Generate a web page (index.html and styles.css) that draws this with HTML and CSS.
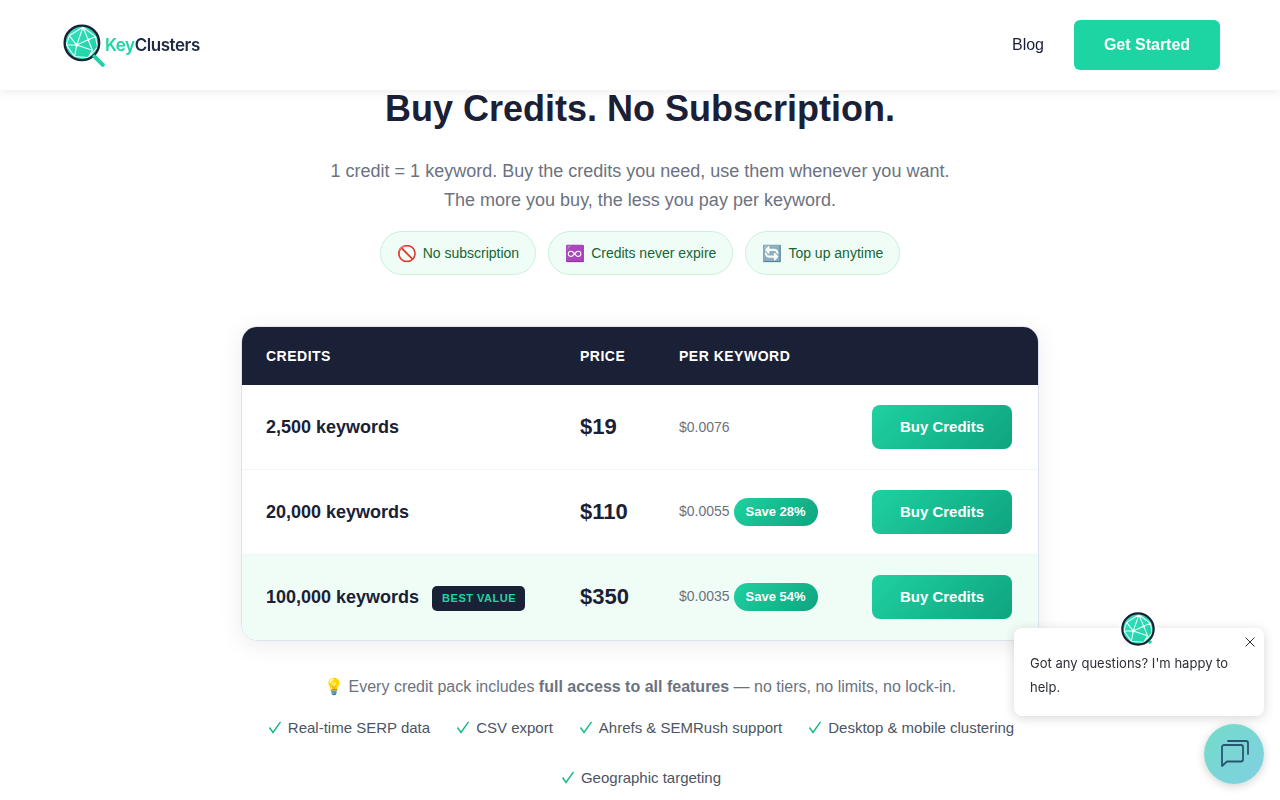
FILE: index.html
```html
<!DOCTYPE html>
<html lang="en">
<head>
    <meta charset="UTF-8">
    <meta name="viewport" content="width=device-width, initial-scale=1.0">
    <title>KeyClusters - Pricing</title>
    <link rel="stylesheet" href="styles.css">
</head>
<body>
    <svg class="defs" width="0" height="0" aria-hidden="true">
        <defs>
            <linearGradient id="globeFill" x1="0" y1="0" x2="1" y2="1">
                <stop offset="0" stop-color="#35e2bf"/>
                <stop offset="1" stop-color="#1ccfa6"/>
            </linearGradient>
            <g id="globe">
                <circle cx="20" cy="20" r="16" fill="url(#globeFill)"/>
                <path d="M8 13L21 5L33 14L35 24L26 34L13 33L5 22Z M8 13L15 22L21 5L26 17L33 14 M15 22L26 17L30 27L26 34 M15 22L13 33 M15 22L30 27 M5 22L15 22" fill="none" stroke="#eafff9" stroke-width="1.100"/>
                <circle cx="15" cy="22" r="1.700" fill="#fff"/>
                <circle cx="26" cy="17" r="1.300" fill="#fff"/>
                <circle cx="21" cy="6" r="1.100" fill="#fff"/>
                <circle cx="20" cy="20" r="16.500" fill="none" stroke="#1a2035" stroke-width="2.300"/>
            </g>
            <path id="check" d="M3.500 6.500L7 11.500L14.500 0.800" fill="none" stroke="#10b981" stroke-width="1.400"/>
        </defs>
    </svg>

    <header class="topbar">
        <a class="logo" href="#">
            <svg class="logo-mark" width="46" height="46" viewBox="0 0 44 44">
                <use href="#globe"/>
                <path d="M32 33L40 41" stroke="#1fd1a8" stroke-width="3.800" stroke-linecap="round"/>
            </svg>
            <span class="logo-text"><span class="logo-key">Key</span>Clusters</span>
        </a>
        <nav class="topnav">
            <a class="nav-link" href="#">Blog</a>
            <a class="nav-cta" href="#">Get Started</a>
        </nav>
    </header>

    <main class="page">
        <h1>Buy Credits. No Subscription.</h1>
        <p class="lead">1 credit = 1 keyword. Buy the credits you need, use them whenever you want.<br>The more you buy, the less you pay per keyword.</p>

        <div class="pills">
            <span class="pill"><span class="pill-icon">🚫</span>No subscription</span>
            <span class="pill"><span class="pill-icon">♾️</span>Credits never expire</span>
            <span class="pill"><span class="pill-icon">🔄</span>Top up anytime</span>
        </div>

        <div class="table-wrap">
            <table class="price-table">
                <thead>
                    <tr>
                        <th class="col-credits">Credits</th>
                        <th class="col-price">Price</th>
                        <th class="col-per">Per Keyword</th>
                        <th class="col-buy"></th>
                    </tr>
                </thead>
                <tbody>
                    <tr>
                        <td class="credits">2,500 keywords</td>
                        <td class="price">$19</td>
                        <td class="per">$0.0076</td>
                        <td><a class="buy-btn" href="#">Buy Credits</a></td>
                    </tr>
                    <tr>
                        <td class="credits">20,000 keywords</td>
                        <td class="price">$110</td>
                        <td class="per">$0.0055 <span class="save">Save 28%</span></td>
                        <td><a class="buy-btn" href="#">Buy Credits</a></td>
                    </tr>
                    <tr class="best">
                        <td class="credits"><div class="credits-row">100,000 keywords <span class="best-tag">Best Value</span></div></td>
                        <td class="price">$350</td>
                        <td class="per">$0.0035 <span class="save">Save 54%</span></td>
                        <td><a class="buy-btn" href="#">Buy Credits</a></td>
                    </tr>
                </tbody>
            </table>
        </div>

        <p class="includes">💡 Every credit pack includes <strong>full access to all features</strong> — no tiers, no limits, no lock-in.</p>

        <ul class="features">
            <li><svg class="tick" width="17" height="13" viewBox="0 0 17 13"><use href="#check"/></svg>Real-time SERP data</li>
            <li><svg class="tick" width="17" height="13" viewBox="0 0 17 13"><use href="#check"/></svg>CSV export</li>
            <li><svg class="tick" width="17" height="13" viewBox="0 0 17 13"><use href="#check"/></svg>Ahrefs &amp; SEMRush support</li>
            <li><svg class="tick" width="17" height="13" viewBox="0 0 17 13"><use href="#check"/></svg>Desktop &amp; mobile clustering</li>
            <li><svg class="tick" width="17" height="13" viewBox="0 0 17 13"><use href="#check"/></svg>Geographic targeting</li>
        </ul>
    </main>

    <aside class="chat-bubble">
        <svg class="chat-avatar" width="38" height="38" viewBox="0 0 40 40">
            <use href="#globe"/>
            <circle cx="33" cy="34" r="2" fill="#1fd1a8"/>
        </svg>
        <svg class="chat-close" width="12" height="12" viewBox="0 0 12 12">
            <path d="M1.500 1.500L10.500 10.500M10.500 1.500L1.500 10.500" stroke="#2b2f36" stroke-width="1"/>
        </svg>
        <p>Got any questions? I'm happy to help.</p>
    </aside>
    <button class="chat-launcher" aria-label="Open chat">
        <svg width="32" height="32" viewBox="0 0 32 32" fill="none" stroke="#2a5570" stroke-width="1.800" stroke-linejoin="round" stroke-linecap="round">
            <path d="M4 9a2 2 0 0 1 2-2h17a2 2 0 0 1 2 2v12.500a2 2 0 0 1-2 2H9L4 28Z"/>
            <path d="M10 3h18a2 2 0 0 1 2 2v11"/>
        </svg>
    </button>
</body>
</html>
```

FILE: styles.css
```css
/* Reset */
* {
    margin: 0;
    padding: 0;
    box-sizing: border-box;
}

body {
    font-family: 'Liberation Sans', Arial, sans-serif;
    background: #fff;
    color: #1a2035;
    height: 800px;
    overflow: hidden;
    position: relative;
}

a {
    text-decoration: none;
}

.defs {
    position: absolute;
}

/* Header */
.topbar {
    position: fixed;
    top: 0;
    left: 0;
    right: 0;
    height: 90px;
    z-index: 10;
    background: #fff;
    box-shadow: 0 2px 10px rgba(0, 0, 0, 0.08);
    display: flex;
    justify-content: space-between;
    align-items: center;
    padding: 0 60px 0 61px;
}

.logo {
    display: flex;
    align-items: center;
}

.logo-text {
    font-family: 'Inter', sans-serif;
    font-size: 17px;
    font-weight: 600;
    letter-spacing: -0.45px;
    color: #1f2a44;
    margin-left: -2px;
}

.logo-key {
    color: #1fd5a5;
}

.topnav {
    display: flex;
    align-items: center;
    gap: 30px;
}

.nav-link {
    font-size: 16px;
    color: #1a2035;
}

.nav-cta {
    width: 146px;
    height: 50px;
    line-height: 50px;
    text-align: center;
    background: #1dd5a3;
    color: #fff;
    font-size: 16px;
    font-weight: 700;
    border-radius: 6px;
}

/* Main */
.page {
    padding-top: 88px;
    text-align: center;
}

h1 {
    font-size: 36px;
    line-height: 42px;
    font-weight: 700;
    color: #1a2035;
}

.lead {
    margin-top: 27px;
    font-size: 18px;
    line-height: 29px;
    color: #6b7280;
}

/* Pills */
.pills {
    margin-top: 16px;
    display: flex;
    justify-content: center;
    gap: 12px;
}

.pill {
    display: flex;
    align-items: center;
    height: 44px;
    padding: 0 16px;
    background: #f0fdf6;
    border: 1px solid #c9f2dd;
    border-radius: 22px;
    font-size: 14px;
    color: #166534;
}

.pill-icon {
    font-size: 16px;
    margin-right: 6px;
}

/* Pricing table */
.table-wrap {
    width: 798px;
    margin: 51px auto 0;
    border: 1px solid #dde3f0;
    border-radius: 16px;
    overflow: hidden;
    box-shadow: 0 4px 24px rgba(0, 0, 0, 0.08);
}

.price-table {
    width: 796px;
    border-collapse: separate;
    border-spacing: 0;
    table-layout: fixed;
    text-align: left;
}

.price-table th {
    height: 58px;
    padding: 0 24px;
    background: #1a2035;
    color: #fff;
    font-size: 14px;
    font-weight: 700;
    letter-spacing: 0.5px;
    text-transform: uppercase;
}

.col-credits { width: 314px; }
.col-price { width: 99px; }
.col-per { width: 193px; }
.col-buy { width: 190px; }

.price-table td {
    height: 85px;
    padding: 0 24px;
    border-bottom: 1px solid #f1f5f9;
}

.price-table tr:last-child td {
    border-bottom-color: transparent;
}

.best td {
    background: #f0fdf6;
}

.credits {
    font-size: 18px;
    font-weight: 700;
    color: #1a2035;
    white-space: nowrap;
}

.credits-row {
    display: flex;
    align-items: center;
    gap: 13px;
}

.best-tag {
    height: 25px;
    line-height: 25px;
    margin-top: 2px;
    padding: 0 9px 0 10px;
    background: #1a2035;
    color: #1fd5a5;
    font-size: 11px;
    letter-spacing: 0.5px;
    text-transform: uppercase;
    border-radius: 5px;
}

.price {
    font-size: 22px;
    font-weight: 700;
    color: #1a2035;
}

.per {
    font-size: 14px;
    color: #6b7280;
    white-space: nowrap;
}

.save {
    display: inline-block;
    width: 84px;
    height: 28px;
    line-height: 28px;
    text-align: center;
    background: linear-gradient(135deg, #1fd1a0, #0ea47f);
    color: #fff;
    font-size: 13px;
    font-weight: 700;
    border-radius: 14px;
}

.buy-btn {
    display: block;
    width: 140px;
    height: 44px;
    line-height: 44px;
    text-align: center;
    background: linear-gradient(135deg, #1fd1a0, #0ea47f);
    color: #fff;
    font-size: 15px;
    font-weight: 700;
    border-radius: 8px;
}

/* Below the table */
.includes {
    margin-top: 35px;
    font-size: 16px;
    line-height: 22px;
    color: #6b7280;
}

.features {
    list-style: none;
    width: 798px;
    margin: 18px auto 0;
    display: flex;
    flex-wrap: wrap;
    justify-content: center;
    column-gap: 24px;
    row-gap: 28px;
}

.features li {
    display: flex;
    align-items: center;
    height: 22px;
    font-size: 15px;
    color: #4b5563;
}

.tick {
    margin-right: 5px;
}

/* Chat widget */
.chat-bubble {
    position: fixed;
    left: 1014px;
    top: 628px;
    width: 250px;
    height: 88px;
    z-index: 20;
    padding: 23px 16px 0;
    background: #fff;
    border-radius: 8px;
    box-shadow: 0 2px 12px rgba(0, 0, 0, 0.16);
    font-family: 'Inter', sans-serif;
    font-size: 13px;
    letter-spacing: 0.03px;
    line-height: 24px;
    color: #2b2f36;
}

.chat-avatar {
    position: absolute;
    left: 105px;
    top: -18px;
    background: #fff;
    border-radius: 50%;
}

.chat-close {
    position: absolute;
    right: 8px;
    top: 8px;
}

.chat-launcher {
    position: fixed;
    left: 1204px;
    top: 724px;
    width: 60px;
    height: 60px;
    z-index: 20;
    border: none;
    border-radius: 50%;
    background: linear-gradient(135deg, #72dcc9, #82cfe2);
    box-shadow: 0 2px 10px rgba(0, 0, 0, 0.18);
    display: flex;
    align-items: center;
    justify-content: center;
}
```
